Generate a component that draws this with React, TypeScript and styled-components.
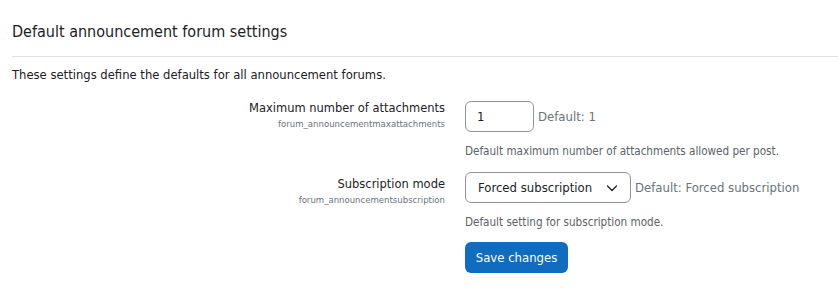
import React from 'react';
import styled, { createGlobalStyle } from 'styled-components';

const GlobalStyle = createGlobalStyle`
  html, body {
    margin: 0;
    padding: 0;
    background: #fff;
  }
  body {
    font-family: 'DejaVu Sans Condensed', 'DejaVu Sans', sans-serif;
    color: #1d2125;
  }
`;

const Page = styled.div`
  padding: 20px 0 0 12px;
`;

const Heading = styled.h3`
  margin: 0;
  font-size: 16px;
  font-weight: 400;
  line-height: 24px;
  padding-bottom: 12px;
  border-bottom: 1px solid #dee2e6;
`;

const Intro = styled.p`
  margin: 8px 0 0;
  font-size: 12.9px;
  line-height: 20px;
`;

const Setting = styled.div<{ $top: number }>`
  display: grid;
  grid-template-columns: 433px 1fr;
  column-gap: 20px;
  margin-top: ${(p) => p.$top}px;
`;

const LabelCol = styled.div<{ $offset: number }>`
  text-align: right;
  margin-top: ${(p) => p.$offset}px;
`;

const Label = styled.div`
  font-size: 12.75px;
  line-height: 18px;
`;

const Code = styled.div`
  font-size: 9.5px;
  line-height: 14px;
  color: #6a737b;
`;

const Field = styled.div`
  display: flex;
  align-items: center;
  gap: 4px;
`;

const TextInput = styled.input`
  box-sizing: border-box;
  width: 69px;
  height: 31px;
  padding: 0 11px;
  border: 1px solid #8f959e;
  border-radius: 6px;
  font: inherit;
  font-size: 13px;
  color: #1d2125;
  background: #fff;
  outline: none;
`;

const SelectBox = styled.div`
  box-sizing: border-box;
  width: 166px;
  height: 31px;
  padding: 0 12px;
  border: 1px solid #8f959e;
  border-radius: 6px;
  display: flex;
  align-items: center;
  justify-content: space-between;
  font-size: 13px;
`;

const DefaultNote = styled.span`
  font-size: 13px;
  color: #6a737b;
`;

const Help = styled.div`
  margin-top: 12px;
  font-size: 11.6px;
  line-height: 14px;
  color: #5b6268;
`;

const SaveButton = styled.button`
  margin-top: 13px;
  box-sizing: border-box;
  width: 103px;
  height: 31px;
  border: none;
  border-radius: 6px;
  background: #0f6cbf;
  color: #fff;
  font: inherit;
  font-size: 13px;
  cursor: pointer;
`;

const Chevron = () => (
  <svg width="12" height="12" viewBox="0 0 12 12" fill="none">
    <path d="M1.5 4l4.5 4.5L10.5 4" stroke="#1d2125" strokeWidth="1.3" strokeLinecap="round" strokeLinejoin="round" />
  </svg>
);

export default function App() {
  return (
    <>
      <GlobalStyle />
      <Page>
        <Heading>Default announcement forum settings</Heading>
        <Intro>These settings define the defaults for all announcement forums.</Intro>

        <Setting $top={16}>
          <LabelCol $offset={-2}>
            <Label>Maximum number of attachments</Label>
            <Code>forum_announcementmaxattachments</Code>
          </LabelCol>
          <div>
            <Field>
              <TextInput defaultValue="1" />
              <DefaultNote>Default: 1</DefaultNote>
            </Field>
            <Help>Default maximum number of attachments allowed per post.</Help>
          </div>
        </Setting>

        <Setting $top={14}>
          <LabelCol $offset={3}>
            <Label>Subscription mode</Label>
            <Code>forum_announcementsubscription</Code>
          </LabelCol>
          <div>
            <Field>
              <SelectBox>
                <span>Forced subscription</span>
                <Chevron />
              </SelectBox>
              <DefaultNote>Default: Forced subscription</DefaultNote>
            </Field>
            <Help>Default setting for subscription mode.</Help>
            <SaveButton>Save changes</SaveButton>
          </div>
        </Setting>
      </Page>
    </>
  );
}
